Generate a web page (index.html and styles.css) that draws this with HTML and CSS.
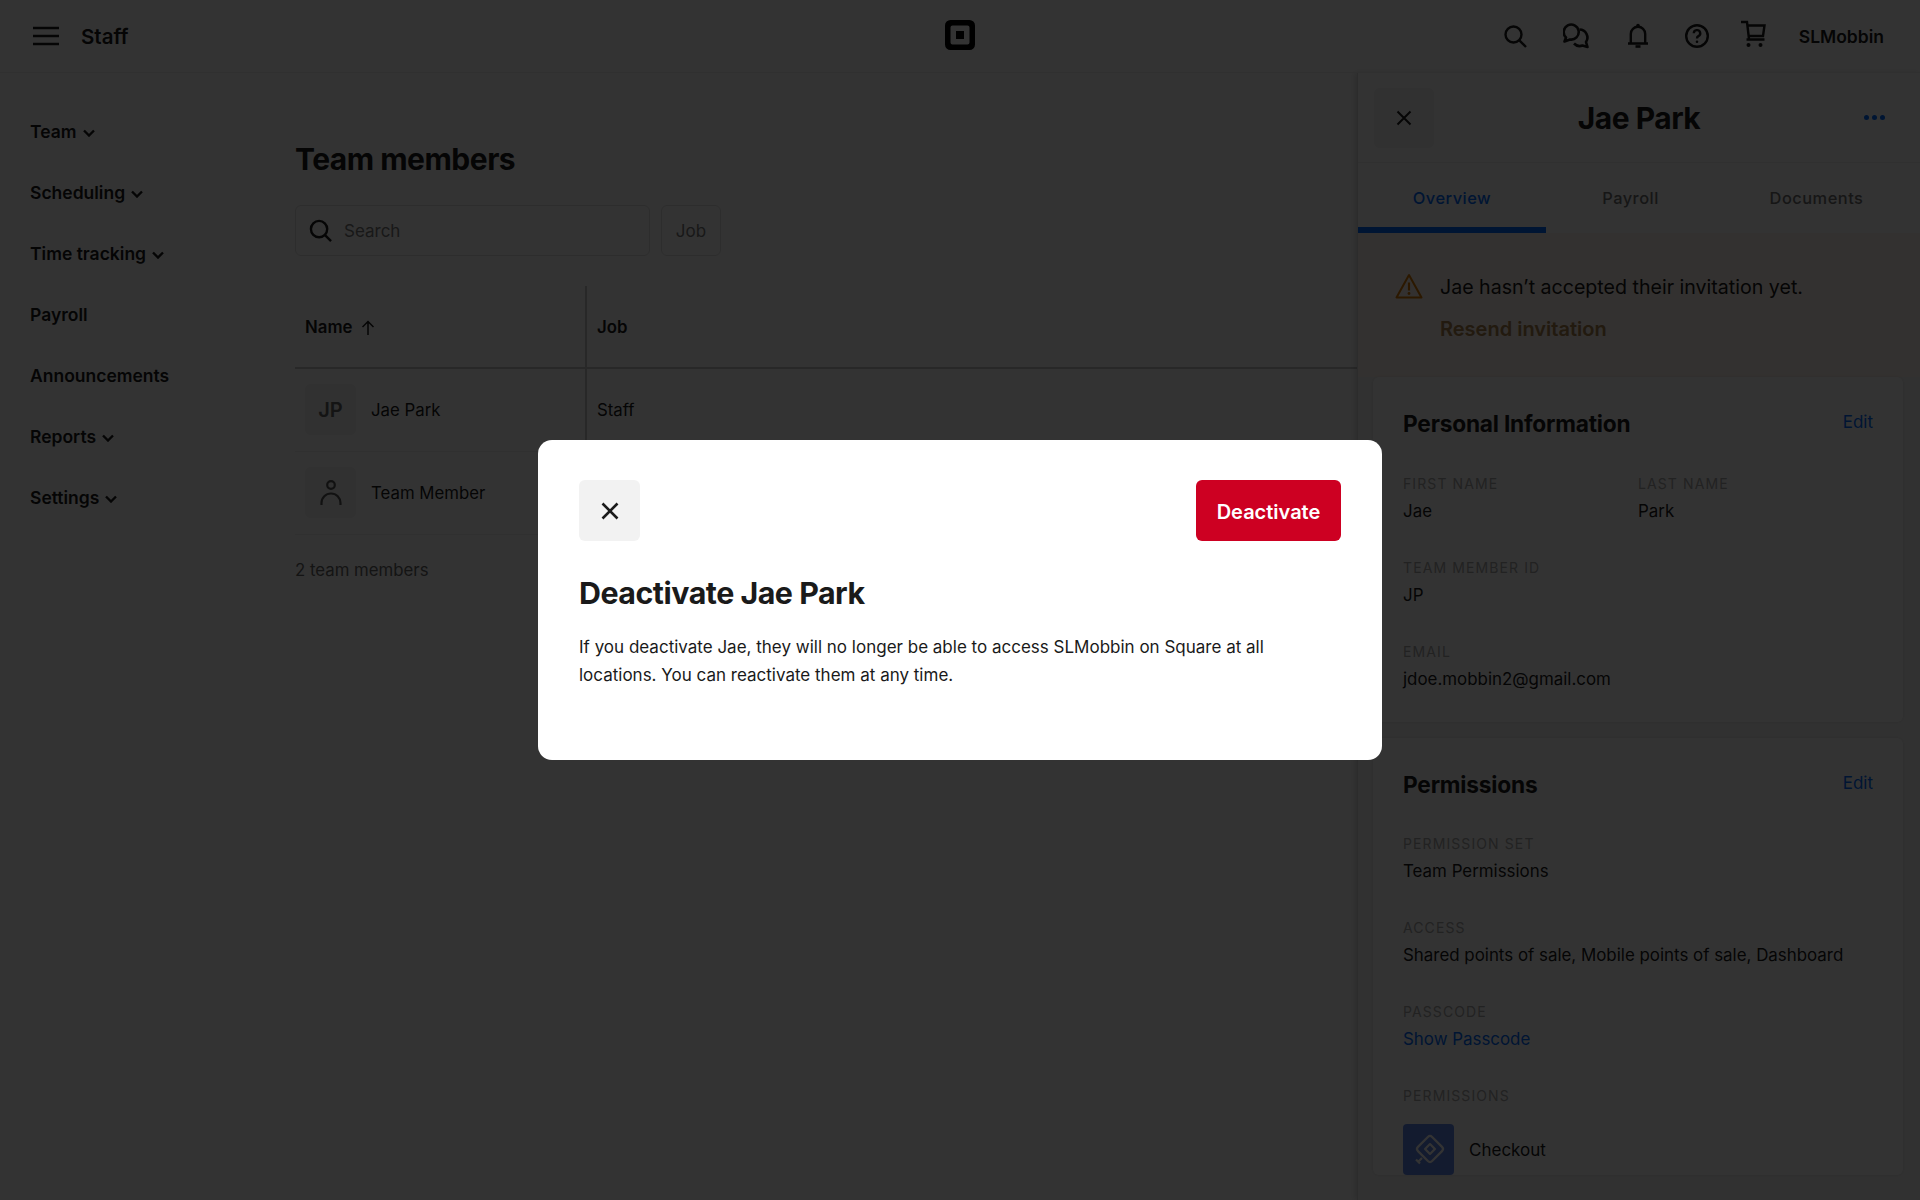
FILE: index.html
```html
<!DOCTYPE html>
<html lang="en">
<head>
    <meta charset="UTF-8">
    <meta name="viewport" content="width=device-width, initial-scale=1.0">
    <title>Staff - Team members</title>
    <link rel="stylesheet" href="styles.css">
</head>
<body>
    <header class="topbar">
        <div class="topbar-left">
            <svg class="menu-icon" width="26" height="20" viewBox="0 0 26 20"><path d="M0 2h26M0 10h26M0 18h26" stroke="#1a1a1a" stroke-width="2.400" fill="none"/></svg>
            <span class="topbar-title">Staff</span>
        </div>
        <svg class="logo" width="30" height="30" viewBox="0 0 30 30"><path fill-rule="evenodd" d="M5.500 0h19A5.500 5.500 0 0 1 30 5.500v19a5.500 5.500 0 0 1-5.500 5.500h-19A5.500 5.500 0 0 1 0 24.500v-19A5.500 5.500 0 0 1 5.500 0zM7.500 5.500A2 2 0 0 0 5.500 7.500v15a2 2 0 0 0 2 2h15a2 2 0 0 0 2-2v-15a2 2 0 0 0-2-2zM11 11h8v8h-8z" fill="#000"/></svg>
        <div class="topbar-right">
            <svg width="24" height="24" viewBox="0 0 24 24" fill="none" stroke="#1a1a1a" stroke-width="2.400"><circle cx="10.500" cy="10.500" r="8"/><path d="M16.300 16.300L23 23"/></svg>
            <svg width="28" height="28" viewBox="0 0 28 28" fill="none" stroke="#1a1a1a" stroke-width="2.600" stroke-linejoin="round"><path d="M1.500 19.500L3 15.500A7.500 7.500 0 1 1 7 17.500z"/><path d="M16.500 7.500A8 8 0 0 1 23 20l1.500 5-5-1.500a8 8 0 0 1-8.500-2"/></svg>
            <svg width="22" height="26" viewBox="0 0 22 26" fill="none" stroke="#1a1a1a" stroke-width="2.400"><path d="M1 20.500h20M3.800 20.500V11a7.200 7.200 0 0 1 14.400 0v9.500"/><circle cx="11" cy="2.500" r="1.800" fill="#1a1a1a" stroke="none"/><path d="M8.500 23.500h5" stroke-width="2.600"/></svg>
            <svg width="24" height="24" viewBox="0 0 24 24" fill="none" stroke="#1a1a1a" stroke-width="2.400"><circle cx="12" cy="12" r="10.800"/><path d="M8.800 9.300a3.200 3.200 0 1 1 4.600 2.900c-1 .5-1.400 1.100-1.400 2.300"/><circle cx="12" cy="17.800" r="1.300" fill="#1a1a1a" stroke="none"/></svg>
            <svg class="cart" width="26" height="28" viewBox="0 0 26 28" fill="none" stroke="#1a1a1a" stroke-width="2.400"><path d="M1 2h6l2 17M6.500 19.500h18M7.500 5.500h17L23 16H9"/><circle cx="8.500" cy="25" r="2" fill="#1a1a1a" stroke="none"/><circle cx="20.500" cy="25" r="2" fill="#1a1a1a" stroke="none"/></svg>
            <span class="account">SLMobbin</span>
        </div>
    </header>

    <div class="layout">
        <nav class="sidebar">
            <a class="nav-item">Team <svg class="chev" width="12" height="8" viewBox="0 0 12 8"><path d="M1 1.500l5 5 5-5" stroke="#1a1a1a" stroke-width="2.400" fill="none"/></svg></a>
            <a class="nav-item">Scheduling <svg class="chev" width="12" height="8" viewBox="0 0 12 8"><path d="M1 1.500l5 5 5-5" stroke="#1a1a1a" stroke-width="2.400" fill="none"/></svg></a>
            <a class="nav-item">Time tracking <svg class="chev" width="12" height="8" viewBox="0 0 12 8"><path d="M1 1.500l5 5 5-5" stroke="#1a1a1a" stroke-width="2.400" fill="none"/></svg></a>
            <a class="nav-item">Payroll</a>
            <a class="nav-item">Announcements</a>
            <a class="nav-item">Reports <svg class="chev" width="12" height="8" viewBox="0 0 12 8"><path d="M1 1.500l5 5 5-5" stroke="#1a1a1a" stroke-width="2.400" fill="none"/></svg></a>
            <a class="nav-item">Settings <svg class="chev" width="12" height="8" viewBox="0 0 12 8"><path d="M1 1.500l5 5 5-5" stroke="#1a1a1a" stroke-width="2.400" fill="none"/></svg></a>
        </nav>

        <main class="main">
            <h1 class="page-title">Team members</h1>
            <div class="filters">
                <div class="search">
                    <svg width="23" height="23" viewBox="0 0 24 24" fill="none" stroke="#1a1a1a" stroke-width="2.500"><circle cx="10.500" cy="10.500" r="8.500"/><path d="M16.500 16.500L23 23"/></svg>
                    <span class="placeholder">Search</span>
                </div>
                <div class="filter-btn">Job</div>
            </div>

            <table class="members">
                <thead>
                    <tr>
                        <th class="col-name">Name <svg class="sort" width="14" height="15" viewBox="0 0 14 15"><path d="M7 15V1.500M1.500 7L7 1.500 12.500 7" stroke="#1a1a1a" stroke-width="1.500" fill="none"/></svg></th>
                        <th>Job</th>
                    </tr>
                </thead>
                <tbody>
                    <tr>
                        <td class="col-name"><div class="member"><span class="avatar">JP</span>Jae Park</div></td>
                        <td>Staff</td>
                    </tr>
                    <tr>
                        <td class="col-name"><div class="member"><span class="avatar"><svg width="22" height="26" viewBox="0 0 22 26" fill="none" stroke="#555" stroke-width="2.200"><circle cx="11" cy="5" r="3.800"/><path d="M1.500 25v-2a9.500 9.500 0 0 1 19 0v2"/></svg></span>Team Member</div></td>
                        <td></td>
                    </tr>
                </tbody>
            </table>
            <p class="count">2 team members</p>
        </main>

        <aside class="panel">
            <div class="panel-head">
                <div class="panel-close"><svg width="16" height="16" viewBox="0 0 16 16"><path d="M1.500 1.500l13 13M14.500 1.500l-13 13" stroke="#1a1a1a" stroke-width="2" fill="none"/></svg></div>
                <h2 class="panel-title">Jae Park</h2>
                <div class="dots"><i></i><i></i><i></i></div>
            </div>
            <div class="tabs">
                <div class="tab tab-overview active">Overview</div>
                <div class="tab tab-payroll">Payroll</div>
                <div class="tab tab-documents">Documents</div>
            </div>
            <div class="banner">
                <svg class="warn" width="28" height="26" viewBox="0 0 28 26" fill="none"><path d="M14 2L1.500 24.500h25z" stroke="#d97a00" stroke-width="2" stroke-linejoin="round"/><path d="M14 9.500v8" stroke="#d97a00" stroke-width="2.200"/><circle cx="14" cy="20.500" r="1.400" fill="#d97a00"/></svg>
                <div>
                    <div class="banner-text">Jae hasn’t accepted their invitation yet.</div>
                    <div class="banner-link">Resend invitation</div>
                </div>
            </div>

            <section class="card card-personal">
                <div class="card-head"><h3>Personal Information</h3><a class="link">Edit</a></div>
                <div class="field-row">
                    <div class="field"><div class="label">First name</div><div class="value">Jae</div></div>
                    <div class="field"><div class="label">Last name</div><div class="value">Park</div></div>
                </div>
                <div class="field"><div class="label">Team member ID</div><div class="value">JP</div></div>
                <div class="field"><div class="label">Email</div><div class="value">jdoe.mobbin2@gmail.com</div></div>
            </section>

            <section class="card">
                <div class="card-head"><h3>Permissions</h3><a class="link">Edit</a></div>
                <div class="field"><div class="label">Permission set</div><div class="value">Team Permissions</div></div>
                <div class="field"><div class="label">Access</div><div class="value">Shared points of sale, Mobile points of sale, Dashboard</div></div>
                <div class="field"><div class="label">Passcode</div><div class="value link">Show Passcode</div></div>
                <div class="field"><div class="label">Permissions</div>
                    <div class="perm">
                        <span class="perm-icon"><svg width="34" height="34" viewBox="0 0 34 34" fill="none" stroke="#fff" stroke-width="2.200" stroke-linejoin="round"><rect x="8" y="6" width="20" height="20" rx="3" transform="rotate(45 18 16)"/><rect x="14.500" y="12.500" width="7" height="7" transform="rotate(45 18 16)"/><path d="M10 25l-4.500 4.500M4 26.500l4 4"/></svg></span>
                        <span>Checkout</span>
                    </div>
                </div>
            </section>
        </aside>
    </div>

    <div class="scrim">
        <div class="modal">
            <div class="modal-head">
                <div class="modal-close"><svg width="18" height="18" viewBox="0 0 18 18"><path d="M1.500 1.500l15 15M16.500 1.500l-15 15" stroke="#1a1a1a" stroke-width="2.600" fill="none"/></svg></div>
                <button class="danger-btn">Deactivate</button>
            </div>
            <h2 class="modal-title">Deactivate Jae Park</h2>
            <p class="modal-text">If you deactivate Jae, they will no longer be able to access SLMobbin on Square at all locations. You can reactivate them at any time.</p>
        </div>
    </div>
</body>
</html>
```

FILE: styles.css
```css
* {
    box-sizing: border-box;
}
html, body {
    height: 100%;
}
body {
    margin: 0;
    height: 1200px;
    overflow: hidden;
    background-color: #fff;
    color: #1a1a1a;
    font-family: Inter, "Liberation Sans", sans-serif;
    font-size: 17px;
}
h1, h2, h3, p {
    margin: 0;
}

/* top bar */
.topbar {
    position: relative;
    height: 73px;
    display: flex;
    align-items: center;
    justify-content: space-between;
    padding: 0 36px 0 33px;
    border-bottom: 1px solid #f0f0f0;
}
.topbar-left {
    display: flex;
    align-items: center;
    gap: 22px;
}
.topbar-title {
    font-size: 20.5px;
    font-weight: 600;
}
.logo {
    position: absolute;
    left: 945px;
    top: 20px;
}
.topbar-right {
    display: flex;
    align-items: center;
    gap: 36px;
}
.cart {
    margin: 0 -3px 4px -5px;
}
.account {
    font-size: 17.5px;
    font-weight: 600;
}

/* layout */
.layout {
    display: flex;
    height: 1127px;
}
.sidebar {
    width: 295px;
    flex-shrink: 0;
    padding: 28px 0 0 30px;
}
.nav-item {
    display: flex;
    align-items: center;
    gap: 6px;
    height: 61px;
    font-size: 17.5px;
    font-weight: 600;
}
.chev {
    margin-top: 3px;
}
.main {
    flex: 1;
    padding-top: 66px;
}
.page-title {
    font-size: 30px;
    font-weight: 700;
    line-height: 40px;
    letter-spacing: -0.5px;
}
.filters {
    display: flex;
    gap: 11px;
    margin-top: 26px;
}
.search {
    width: 355px;
    height: 51px;
    display: flex;
    align-items: center;
    gap: 12px;
    padding-left: 13px;
    border: 1px solid #e0e0e0;
    border-radius: 6px;
}
.placeholder {
    font-size: 17px;
    color: #7a7a7a;
}
.filter-btn {
    width: 60px;
    height: 51px;
    display: flex;
    align-items: center;
    justify-content: center;
    border: 1px solid #e0e0e0;
    border-radius: 6px;
    color: #7a7a7a;
}
.members {
    width: 100%;
    margin-top: 30px;
    border-collapse: collapse;
    font-size: 16.8px;
}
.members th {
    height: 82px;
    padding: 0 10px;
    text-align: left;
    font-size: 16.8px;
    font-weight: 600;
    border-bottom: 2px solid #c8c8c8;
}
.members td {
    height: 83px;
    padding: 0 10px;
    border-bottom: 1px solid #f0f0f0;
}
.col-name {
    width: 291px;
    border-right: 2px solid #c8c8c8;
}
.sort {
    margin-left: 4px;
    vertical-align: -2px;
}
.member {
    display: flex;
    align-items: center;
    gap: 15px;
}
.avatar {
    width: 51px;
    height: 51px;
    display: flex;
    align-items: center;
    justify-content: center;
    background-color: #f2f2f2;
    border-radius: 6px;
    font-size: 20px;
    font-weight: 600;
    color: #666;
}
.count {
    margin-top: 25px;
    font-size: 16.8px;
    color: #666;
}

/* side panel */
.panel {
    width: 563px;
    flex-shrink: 0;
    background-color: #f4f4f4;
    border-left: 1px solid #dadada;
    box-shadow: -2px 0 6px rgba(0, 0, 0, 0.15);
}
.panel-head {
    height: 90px;
    display: flex;
    align-items: center;
    justify-content: space-between;
    padding: 0 35px 0 16px;
    background-color: #fff;
    border-bottom: 1px solid #eee;
}
.panel-close {
    width: 60px;
    height: 60px;
    display: flex;
    align-items: center;
    justify-content: center;
    background-color: #f2f2f2;
    border-radius: 6px;
}
.panel-title {
    font-size: 30px;
    font-weight: 700;
    letter-spacing: -0.5px;
    margin-right: 20px;
}
.dots {
    display: flex;
    gap: 3px;
}
.dots i {
    width: 5px;
    height: 5px;
    border-radius: 50%;
    background-color: #006aff;
}
.tabs {
    display: flex;
    height: 70px;
    background-color: #fff;
}
.tab {
    text-align: center;
    padding-top: 25px;
    font-size: 16.4px;
    font-weight: 500;
    letter-spacing: 0.5px;
    color: #6f6f6f;
}
.tab-overview {
    width: 188px;
}
.tab-payroll {
    width: 169px;
}
.tab-documents {
    width: 203px;
}
.tab.active {
    color: #006aff;
    border-bottom: 6px solid #006aff;
}
.banner {
    height: 144px;
    display: flex;
    gap: 17px;
    padding: 40px 0 0 37px;
    background-color: #fff4ed;
}
.banner-text {
    font-size: 19.6px;
    line-height: 28px;
}
.banner-link {
    margin-top: 14px;
    font-size: 20px;
    font-weight: 600;
    color: #a8804e;
    line-height: 28px;
}
.card {
    margin: 0 0 16px 15px;
    width: 530px;
    padding: 31px 30px 0 30px;
    background-color: #fff;
    border-radius: 6px;
    box-shadow: 0 0 3px rgba(0, 0, 0, 0.1);
}
.card-personal {
    height: 345px;
}
.card-head {
    display: flex;
    justify-content: space-between;
    align-items: flex-start;
    margin-bottom: 29px;
}
.card-personal .card-head {
    margin-bottom: 30px;
}
.card-head h3 {
    font-size: 22.7px;
    font-weight: 700;
    line-height: 32px;
    letter-spacing: -0.2px;
}
.link {
    color: #006aff;
}
.card-head .link {
    line-height: 28px;
}
.field-row {
    display: flex;
}
.field-row .field {
    width: 237px;
}
.field {
    margin-bottom: 29px;
}
.label {
    font-size: 14px;
    line-height: 27px;
    letter-spacing: 1.1px;
    text-transform: uppercase;
    color: #a8a8a8;
}
.value {
    font-size: 16.9px;
    line-height: 28px;
}
.perm {
    display: flex;
    align-items: center;
    gap: 15px;
    margin-top: 15px;
}
.perm-icon {
    width: 51px;
    height: 51px;
    display: flex;
    align-items: center;
    justify-content: center;
    background-color: #6288e8;
    border-radius: 4px;
}

/* dialog */
.scrim {
    position: fixed;
    inset: 0;
    display: flex;
    align-items: center;
    justify-content: center;
    background-color: rgba(0, 0, 0, 0.8);
}
.modal {
    width: 844px;
    height: 320px;
    padding: 40px 41px;
    background-color: #fff;
    border-radius: 14px;
}
.modal-head {
    display: flex;
    justify-content: space-between;
    align-items: center;
}
.modal-close {
    width: 61px;
    height: 61px;
    display: flex;
    align-items: center;
    justify-content: center;
    background-color: #f2f2f2;
    border-radius: 6px;
}
.danger-btn {
    width: 145px;
    height: 61px;
    padding-top: 3px;
    border: 0;
    border-radius: 6px;
    background-color: #cd0022;
    color: #fff;
    font-family: inherit;
    font-size: 20px;
    font-weight: 600;
}
.modal-title {
    margin-top: 32px;
    font-size: 30.4px;
    font-weight: 700;
    line-height: 40px;
    letter-spacing: -0.5px;
}
.modal-text {
    margin-top: 21px;
    font-size: 17px;
    line-height: 27.5px;
}
```
